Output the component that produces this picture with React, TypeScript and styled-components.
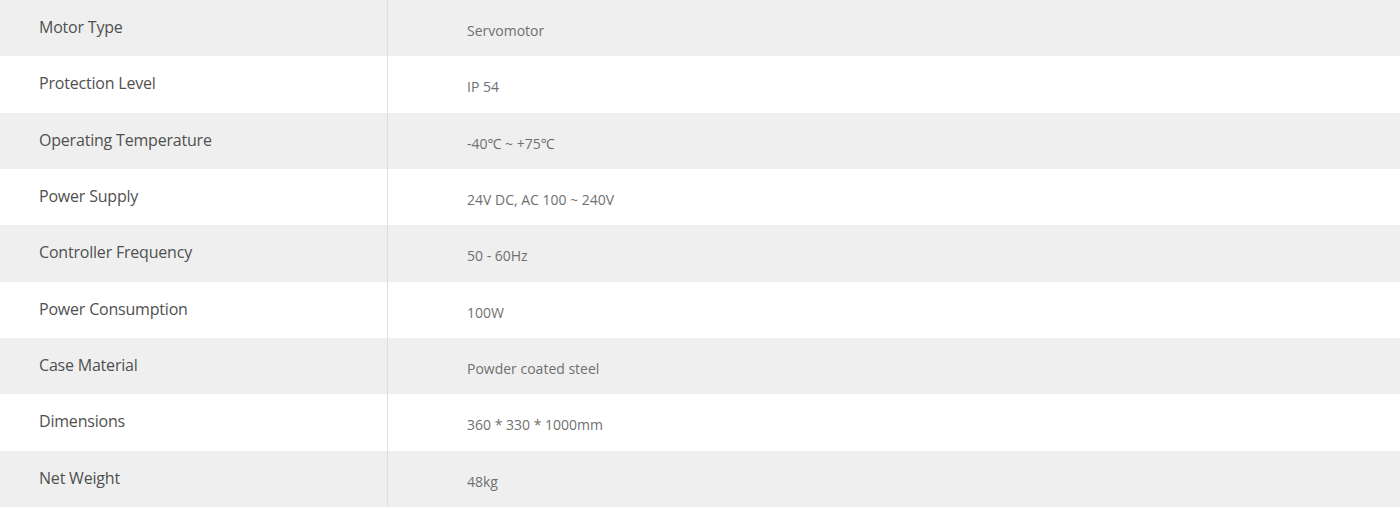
import React from "react";
import styled, { createGlobalStyle } from "styled-components";

const Global = createGlobalStyle`
  html, body { margin: 0; padding: 0; background: #ffffff; }
  body { font-family: "Open Sans", "Noto Sans", sans-serif; }
`;

const Table = styled.div`
  display: grid;
  grid-template-columns: 387px 1fr;
  width: 1400px;
`;

const Row = styled.div<{ $shaded: boolean }>`
  display: contents;
  & > div {
    background: ${(p) => (p.$shaded ? "#efefef" : "#ffffff")};
  }
`;

const Label = styled.div`
  height: 56.33px;
  box-sizing: border-box;
  display: flex;
  align-items: center;
  padding: 0 0 2px 39px;
  font-size: 16px;
  letter-spacing: -0.2px;
  color: #505050;
`;

const Value = styled.div`
  height: 56.33px;
  box-sizing: border-box;
  display: flex;
  align-items: center;
  padding: 5px 0 0 79px;
  border-left: 1px solid #dedede;
  font-size: 14px;
  letter-spacing: 0;
  color: #707070;
`;

const specs: [string, string][] = [
  ["Motor Type", "Servomotor"],
  ["Protection Level", "IP 54"],
  ["Operating Temperature", "-40\u2103 ~ +75\u2103"],
  ["Power Supply", "24V DC, AC 100 ~ 240V"],
  ["Controller Frequency", "50 - 60Hz"],
  ["Power Consumption", "100W"],
  ["Case Material", "Powder coated steel"],
  ["Dimensions", "360 * 330 * 1000mm"],
  ["Net Weight", "48kg"],
];

export default function App() {
  return (
    <>
      <Global />
      <Table>
        {specs.map(([k, v], i) => (
          <Row key={k} $shaded={i % 2 === 0}>
            <Label>{k}</Label>
            <Value>{v}</Value>
          </Row>
        ))}
      </Table>
    </>
  );
}
